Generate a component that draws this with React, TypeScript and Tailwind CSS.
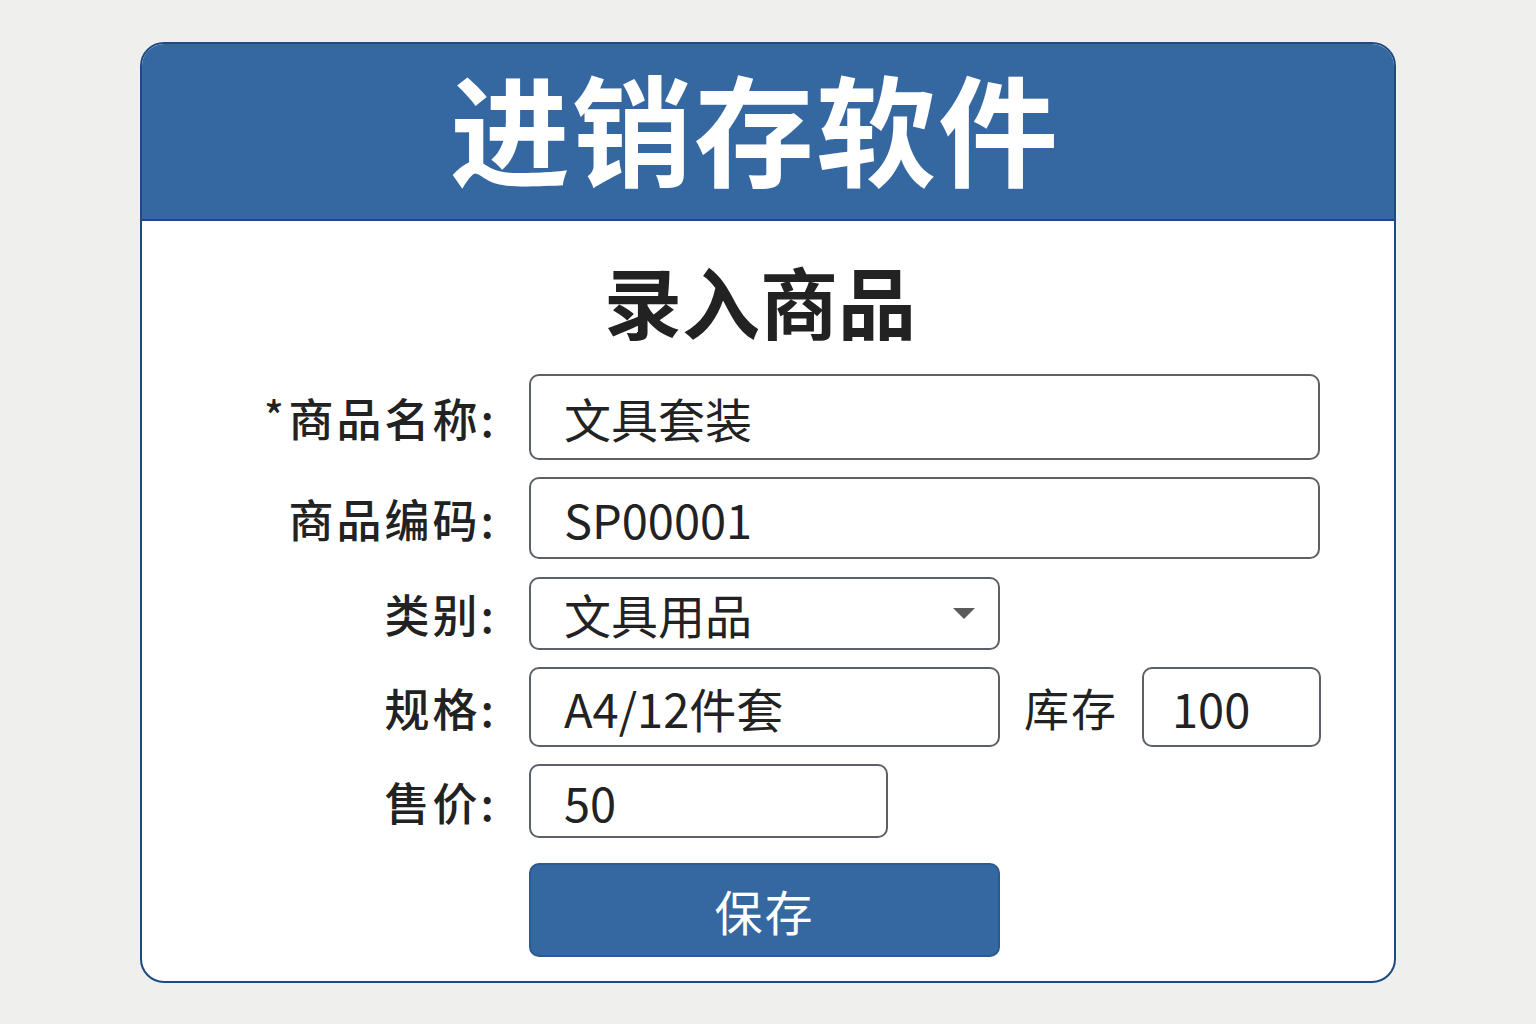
const font = { fontFamily: '"Noto Sans CJK SC", "Noto Sans", sans-serif' }

function Label({ children }: { children: React.ReactNode }) {
  return (
    <div className="w-[355px] shrink-0 text-right text-[45px] font-medium leading-none text-[#222] tracking-[3px]">
      {children}
    </div>
  )
}

function Field({ value, className }: { value: string; className: string }) {
  return (
    <div
      className={
        "flex items-center rounded-[10px] border-2 border-[#5c6068] bg-white pl-[33px] text-[47px] leading-none text-[#222] " +
        className
      }
    >
      {value}
    </div>
  )
}

export default function App() {
  return (
    <div className="min-h-[1024px] w-full bg-[#efefee] pt-[42px]" style={font}>
      <div className="ml-[140px] w-[1256px] h-[941px] rounded-[24px] border-2 border-[#1d4a80] bg-white">
        <div className="h-[177px] rounded-t-[22px] bg-[#3568a1] border-b-2 border-[#1d4a80] flex items-center justify-center pb-[12px] pr-[26px]">
          <h1 className="text-[120px] font-bold text-white leading-[1.2] tracking-[2px] whitespace-nowrap">进销存软件</h1>
        </div>

        <h2 className="mt-[40px] text-center text-[78px] font-bold leading-none text-[#222] pr-[16px]">录入商品</h2>

        <div className="mt-[35px] flex flex-col">
          <div className="flex items-center gap-[32px] h-[86px]">
            <Label>
              <span className="relative -top-[6px] mr-[2px] text-[40px]">*</span>商品名称:
            </Label>
            <Field value="文具套装" className="w-[791px] h-[86px]" />
          </div>

          <div className="mt-[17px] flex items-center gap-[32px] h-[82px]">
            <Label>商品编码:</Label>
            <Field value="SP00001" className="w-[791px] h-[82px]" />
          </div>

          <div className="mt-[18px] flex items-center gap-[32px] h-[73px]">
            <Label>类别:</Label>
            <div className="relative flex h-[73px] w-[471px] items-center justify-between rounded-[10px] border-2 border-[#5c6068] bg-white pl-[33px] pr-[22px] text-[47px] leading-none text-[#222]">
              <span>文具用品</span>
              <svg width="24" height="13" viewBox="0 0 24 13">
                <path d="M1 1 L23 1 L12 12 Z" fill="#5a5a5a" />
              </svg>
            </div>
          </div>

          <div className="mt-[17px] flex items-center gap-[32px] h-[80px]">
            <Label>规格:</Label>
            <Field value="A4/12件套" className="w-[471px] h-[80px]" />
            <div className="-ml-[8px] flex items-center gap-[24px]">
              <span className="text-[45px] leading-none text-[#222] tracking-[2px]">库存</span>
              <Field value="100" className="w-[179px] h-[80px] !pl-[28px]" />
            </div>
          </div>

          <div className="mt-[17px] flex items-center gap-[32px] h-[74px]">
            <Label>售价:</Label>
            <Field value="50" className="w-[359px] h-[74px]" />
          </div>

          <div className="mt-[25px] flex gap-[32px]">
            <div className="w-[355px] shrink-0" />
            <button className="h-[94px] w-[471px] rounded-[10px] border-2 border-[#2a5a92] bg-[#3568a1] text-[48px] text-white leading-none tracking-[2px]">
              保存
            </button>
          </div>
        </div>
      </div>
    </div>
  )
}
